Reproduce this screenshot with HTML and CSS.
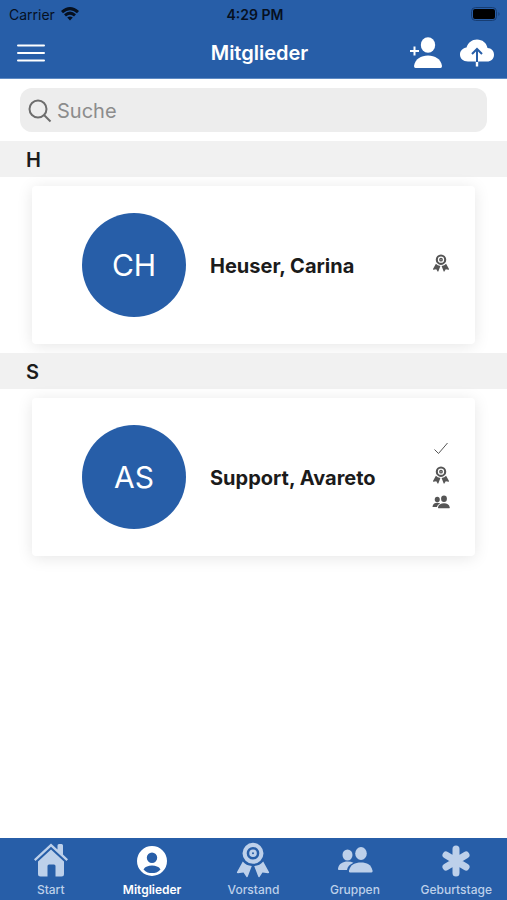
FILE: index.html
```html
<!DOCTYPE html>
<html lang="de">
<head>
<meta charset="utf-8">
<meta name="viewport" content="width=device-width, initial-scale=1">
<title>Mitglieder</title>
<link rel="stylesheet" href="styles.css">
</head>
<body>
<svg class="sprite" aria-hidden="true">
  <symbol id="ribbon" viewBox="0 0 36 36">
    <path fill-rule="evenodd" d="M18 .8a10.500 10.500 0 1 1 0 21a10.500 10.500 0 0 1 0-21zM18 5a6.300 6.300 0 1 0 0 12.600a6.300 6.300 0 0 0 0-12.600z"/>
    <path fill-rule="evenodd" d="M18 7.500a3.800 3.800 0 1 1 0 7.600a3.800 3.800 0 0 1 0-7.600zM18 10.300a1 1 0 1 0 0 2a1 1 0 0 0 0-2z"/>
    <path d="M7.800 19.500Q11 23.500 16.800 24L12.800 34.500Q12.200 36 11.300 34.800L8.500 30.500L3 31.300Q1.500 31.300 2 30zM28.200 19.500Q25 23.500 19.200 24L23.200 34.500Q23.800 36 24.700 34.800L27.500 30.500L33 31.300Q34.500 31.300 34 30z"/>
  </symbol>
  <symbol id="people" viewBox="0 0 36 28">
    <ellipse cx="24" cy="7.500" rx="5.800" ry="6.500"/>
    <ellipse cx="10.500" cy="9" rx="5" ry="5.500"/>
    <path d="M13 26.500Q11.500 26.500 12 24.500C13.500 18.500 18 16.500 24 16.500S34 18.500 35.500 24.500Q36 26.500 34.500 26.500z"/>
    <path d="M16.500 16.800C12.500 18.500 10.500 21 10 24H2Q.7 24 1 22.500C2 17.500 6 15.500 10.500 15.500Q14 15.500 16.500 16.800z"/>
  </symbol>
</svg>
<div class="app">
  <header class="top">
    <div class="status">
      <span class="carrier">Carrier
        <svg class="wifi" viewBox="0 0 18 14" aria-hidden="true"><path d="M1 5.200Q9-2 17 5.200M4 8.300Q9 4 14 8.300"/><path class="dot" d="M6.200 10.500Q9 8.300 11.800 10.500L9 13.500z"/></svg>
      </span>
      <span class="clock">4:29 PM</span>
      <svg class="battery" viewBox="0 0 30 14" aria-hidden="true"><rect class="shell" x=".5" y=".5" width="25" height="13" rx="4"/><rect x="2" y="2" width="22" height="10" rx="2"/><path class="cap" d="M27.500 5Q29.500 7 27.500 9z"/></svg>
    </div>
    <div class="nav">
      <button class="tool menu" type="button" aria-label="Menü"><svg viewBox="0 0 30 20"><path d="M2 2.500H28M2 10H28M2 17.500H28"/></svg></button>
      <h1>Mitglieder</h1>
      <div class="actions">
        <button class="tool" type="button" aria-label="Mitglied hinzufügen"><svg class="add" viewBox="0 0 34 32"><ellipse cx="19" cy="8" rx="7.200" ry="7.800"/><path d="M6.500 31Q5 31 5 29C6 22 12 18.500 19 18.500S32 22 33 29Q33 31 31.500 31z"/><path class="plus" d="M1 14H10M5.500 9.500V18.500"/></svg></button>
        <button class="tool" type="button" aria-label="Hochladen"><svg class="cloud" viewBox="0 0 36 30"><path d="M9 23.500C4 23.500 1 20.500 1 16.500C1 12.500 4 10 7.500 9.500C9 4.500 13 1.500 18 1.500C23.500 1.500 27.500 5 28.500 10C32.500 10.200 35 13 35 16.700C35 20.700 32 23.500 28 23.500H19.200V28.500H16.800V23.500z"/><path class="arrow" d="M18 24V11.500M13 16L18 11L23 16"/></svg></button>
      </div>
    </div>
  </header>
  <main>
    <label class="search">
      <svg viewBox="0 0 24 24" aria-hidden="true"><circle cx="10" cy="10" r="8.500"/><path d="M16 16L22.500 22.500"/></svg>
      <input type="search" placeholder="Suche" aria-label="Suche">
    </label>
    <section>
      <h2>H</h2>
      <article class="card">
        <span class="avatar">CH</span>
        <h3>Heuser, Carina</h3>
        <div class="badges"><svg><use href="#ribbon"/></svg></div>
      </article>
    </section>
    <section>
      <h2>S</h2>
      <article class="card">
        <span class="avatar">AS</span>
        <h3>Support, Avareto</h3>
        <div class="badges">
          <svg class="check" viewBox="0 0 18 18"><path d="M2.500 10.500L6.500 14.500L15.500 4"/></svg>
          <svg><use href="#ribbon"/></svg>
          <svg><use href="#people"/></svg>
        </div>
      </article>
    </section>
  </main>
  <nav class="tabs">
    <a href="#start"><svg viewBox="0 0 36 36"><path d="M18 1.500L24.500 7.500V3.500Q24.500 2 26 2H28.500Q30 2 30 3.500V12.500L35 17.200L33.500 19L18 4.800L2.500 19L1 17.200z"/><path d="M18 7.500L31 19.500V32Q31 34.500 28.500 34.500H22.500V24Q22.500 22.500 21 22.500H16Q14.500 22.500 14.500 24V34.500H7.500Q5 34.500 5 32V19.500z"/></svg>Start</a>
    <a class="active" href="#mitglieder" aria-current="page"><svg viewBox="0 0 36 36"><path fill-rule="evenodd" d="M18 4a15 15 0 1 1 0 30a15 15 0 0 1 0-30zM18 10.500a5.200 5.200 0 1 0 0 10.400a5.200 5.200 0 0 0 0-10.400zM9.500 27.500C12 30.500 15 31 18 31S24 30.500 26.500 27.500C25 24.500 21.500 23.500 18 23.500S11 24.500 9.500 27.500z"/></svg>Mitglieder</a>
    <a href="#vorstand"><svg><use href="#ribbon"/></svg>Vorstand</a>
    <a href="#gruppen"><svg><use href="#people"/></svg>Gruppen</a>
    <a href="#geburtstage"><svg class="star" viewBox="0 0 36 36"><path d="M18 7V31M8 13L28 25M28 13L8 25"/></svg>Geburtstage</a>
  </nav>
</div>
</body>
</html>
```
FILE: styles.css
```css
* { box-sizing: border-box; }
body {
  margin: 0;
  background: #fff;
  color: #1b1b1b;
  font-family: Inter, "Liberation Sans", sans-serif;
}
h1, h2, h3 { margin: 0; }
svg { display: block; fill: currentColor; }
.sprite { position: absolute; width: 0; height: 0; }
.app { display: flex; flex-direction: column; min-height: 100vh; }

.top { background: #275ea8; border-bottom: 1px solid #5f8bc4; }
.status {
  display: grid;
  grid-template-columns: 1fr auto 1fr;
  align-items: center;
  height: 28px;
  padding: 0 6px 0 9px;
  color: #06101f;
  font-size: 14px;
}
.carrier { display: flex; align-items: center; gap: 6px; }
.wifi { width: 18px; height: 14px; fill: none; stroke: currentColor; stroke-width: 3; }
.wifi .dot { fill: currentColor; stroke: none; }
.clock { font-weight: 600; }
.battery { width: 30px; height: 14px; justify-self: end; color: #000; }
.battery .shell { fill: none; stroke: #173d72; }
.battery .cap { fill: #173d72; }

.nav {
  display: grid;
  grid-template-columns: 1fr auto 1fr;
  align-items: center;
  height: 50px;
  padding: 0 12px 0 16px;
  color: #fff;
}
.nav h1 { padding-left: 8px; font-size: 20px; font-weight: 600; line-height: 24px; }
.tool { padding: 0; border: 0; background: none; color: inherit; }
.menu svg { width: 30px; height: 20px; stroke: currentColor; stroke-width: 2; stroke-linecap: round; }
.actions { display: flex; justify-content: flex-end; align-items: center; gap: 16px; }
.add { width: 34px; height: 32px; }
.plus { stroke: currentColor; stroke-width: 2; }
.cloud { width: 36px; height: 30px; }
.arrow { fill: none; stroke: #275ea8; stroke-width: 2; }

.search {
  display: flex;
  align-items: center;
  gap: 5px;
  height: 44px;
  margin: 9px 20px;
  padding: 2px 8px 0;
  border-radius: 12px;
  background: #ededed;
}
.search svg { width: 24px; height: 24px; fill: none; stroke: #6d6d6d; stroke-width: 2; }
.search input {
  flex: 1;
  min-width: 0;
  padding: 0;
  border: 0;
  outline: 0;
  background: none;
  font: 20px/24px Inter, "Liberation Sans", sans-serif;
}
.search input::placeholder { color: #8c8c8c; opacity: 1; }

main { flex: 1; }
h2 {
  padding: 2px 26px 0;
  background: #f1f1f1;
  font-size: 20px;
  font-weight: 600;
  line-height: 34px;
}
.card {
  display: flex;
  align-items: center;
  gap: 24px;
  min-height: 158px;
  margin: 9px 32px;
  padding: 16px 25px 16px 50px;
  border-radius: 4px;
  background: #fff;
  box-shadow: 0 2px 16px rgba(0, 0, 0, 0.1);
}
.avatar {
  display: grid;
  place-items: center;
  flex: none;
  width: 104px;
  height: 104px;
  border-radius: 50%;
  background: #275ea8;
  color: #fff;
  font-size: 30px;
}
h3 { flex: 1; padding-top: 2px; font-size: 20px; font-weight: 700; line-height: 24px; }
.badges { display: grid; gap: 9px; padding-bottom: 4px; color: #555; }
.badges svg { width: 18px; height: 18px; }
.badges .check { fill: none; stroke: currentColor; }

.tabs {
  position: sticky;
  bottom: 0;
  display: grid;
  grid-template-columns: repeat(5, 1fr);
  height: 62px;
  padding-top: 4px;
  background: #275ea8;
}
.tabs a {
  display: flex;
  flex-direction: column;
  align-items: center;
  gap: 4px;
  color: #bdd0ea;
  font-size: 12px;
  font-weight: 500;
  line-height: 16px;
  text-decoration: none;
}
.tabs svg { width: 36px; height: 36px; }
.tabs .active { color: #fff; font-weight: 600; }
.tabs .star { stroke: currentColor; stroke-width: 7; stroke-linecap: round; }
```
